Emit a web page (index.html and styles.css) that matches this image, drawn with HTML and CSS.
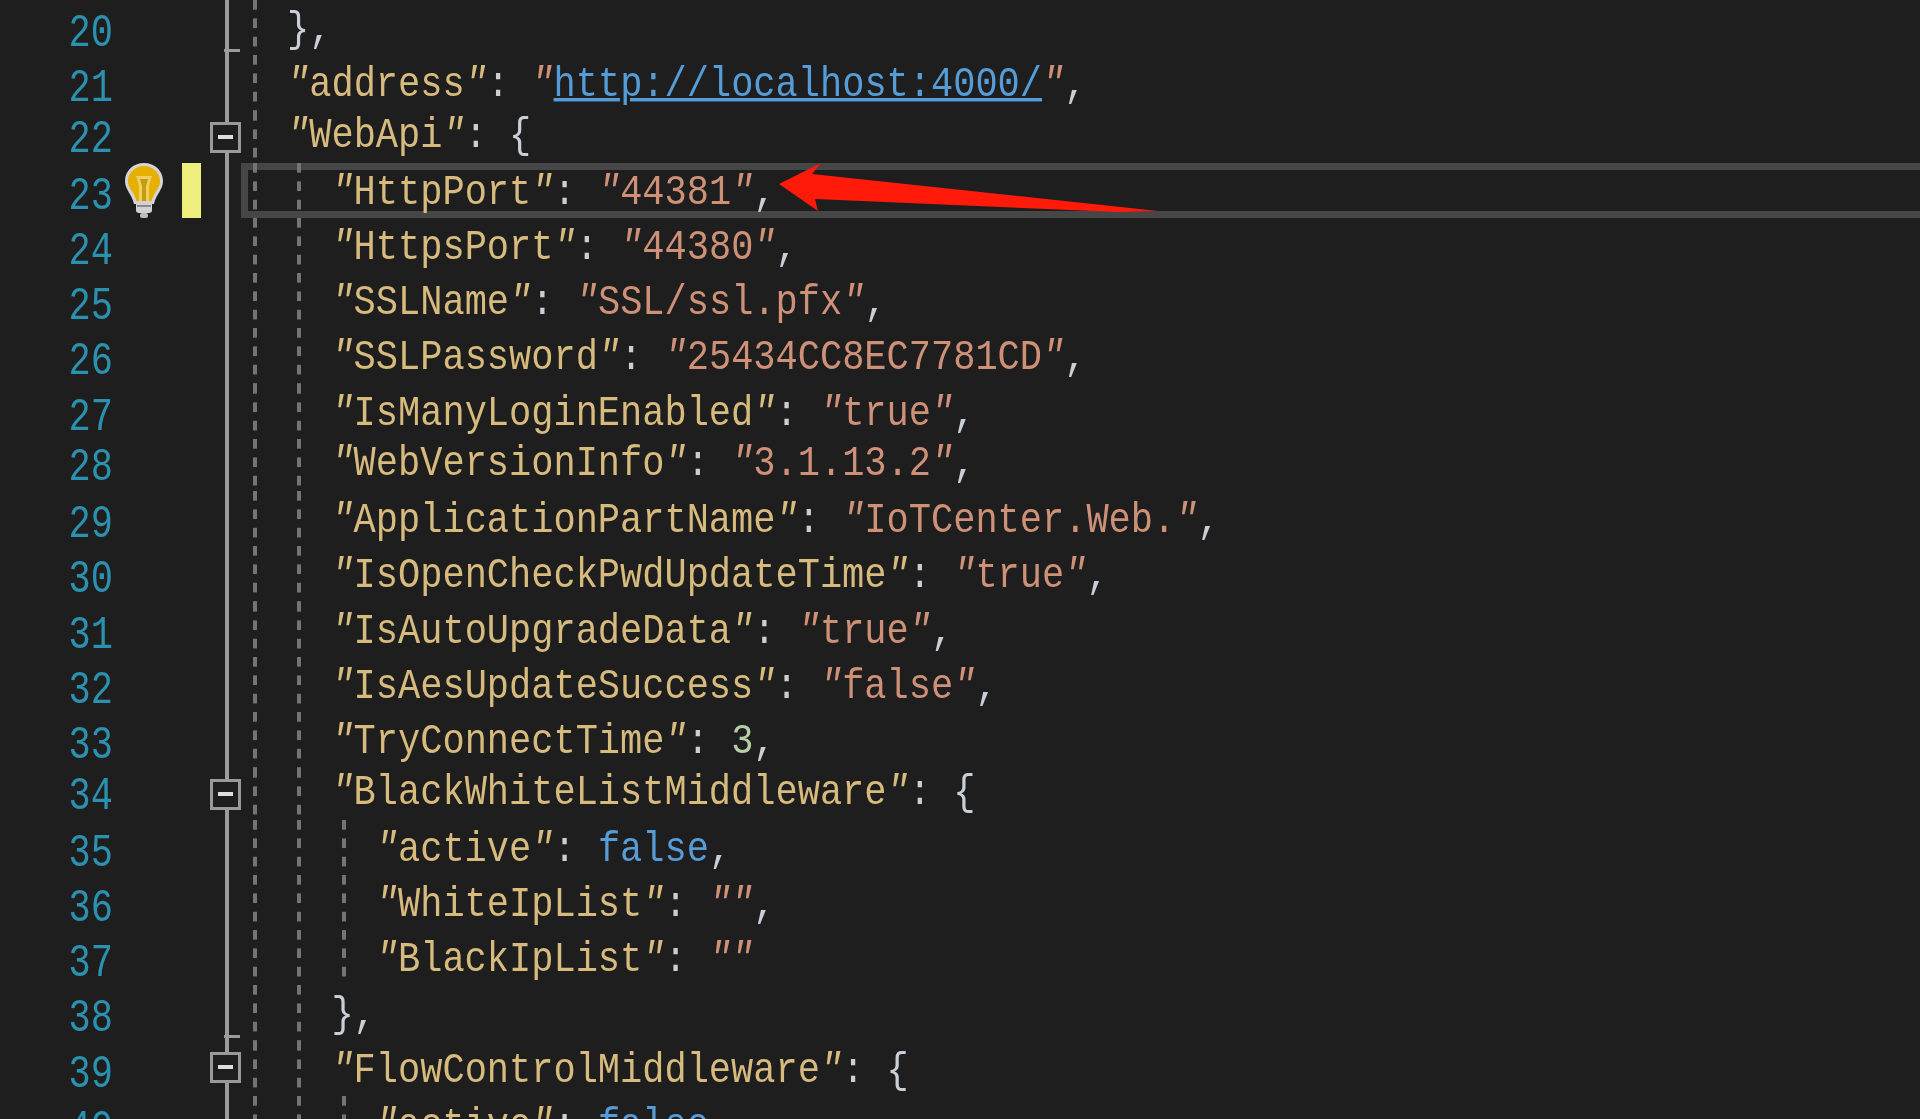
FILE: index.html
```html
<!DOCTYPE html>
<html lang="en">
<head>
<meta charset="utf-8">
<title>appsettings.json</title>
<link rel="stylesheet" href="styles.css">
</head>
<body>
<main class="editor">
  <div class="row"><span class="num">20</span><span class="mark"></span><span class="fold fold-end"></span><span class="guide"></span><span class="code"><b>},</b></span></div>
  <div class="row"><span class="num">21</span><span class="mark"></span><span class="fold"></span><span class="guide"></span><span class="code"><span class="k"><i>"</i>address<i>"</i></span><b>:</b> <span class="s"><i>"</i></span><a class="link">http://localhost:4000/</a><span class="s"><i>"</i></span><b>,</b></span></div>
  <div class="row short"><span class="num">22</span><span class="mark"></span><span class="fold fold-open"><span class="box"></span></span><span class="guide"></span><span class="code"><span class="k"><i>"</i>WebApi<i>"</i></span><b>: {</b></span></div>
  <div class="row current"><span class="num">23</span><span class="mark"><svg class="bulb" viewBox="0 0 38 55"><path d="M19 0C8 0 0 8 0 18c0 9 7 13 9 23h20c2-10 9-14 9-23C38 8 30 0 19 0z" fill="#d4d4d4"/><path d="M19 3C10 3 3 10 3 18c0 8 7 12 8.500 20h15c1.500-8 8.500-12 8.500-20C35 10 28 3 19 3z" fill="#e6b000"/><path d="M11 13h16l-3 9v16h-10V22z" fill="#f0cf62"/><path d="M15 16h8l-2 7v15h-4V23z" fill="#c79a14"/><rect x="11" y="38" width="16" height="12" rx="3" fill="#d2d2d2"/><rect x="12" y="42" width="14" height="2" fill="#8b8b8b"/><rect x="15" y="50" width="8" height="5" rx="2" fill="#bcbcbc"/></svg><span class="bar"></span></span><span class="fold"></span><span class="guide"></span><span class="guide"></span><span class="code"><span class="k"><i>"</i>HttpPort<i>"</i></span><b>:</b> <span class="s"><i>"</i>44381<i>"</i></span><b>,</b></span><svg class="arrow" viewBox="0 0 380 50"><polygon points="0,21 42,0 33,11 379,48 338,49 36,36 39,48"/></svg></div>
  <div class="row"><span class="num">24</span><span class="mark"></span><span class="fold"></span><span class="guide"></span><span class="guide"></span><span class="code"><span class="k"><i>"</i>HttpsPort<i>"</i></span><b>:</b> <span class="s"><i>"</i>44380<i>"</i></span><b>,</b></span></div>
  <div class="row"><span class="num">25</span><span class="mark"></span><span class="fold"></span><span class="guide"></span><span class="guide"></span><span class="code"><span class="k"><i>"</i>SSLName<i>"</i></span><b>:</b> <span class="s"><i>"</i>SSL/ssl.pfx<i>"</i></span><b>,</b></span></div>
  <div class="row"><span class="num">26</span><span class="mark"></span><span class="fold"></span><span class="guide"></span><span class="guide"></span><span class="code"><span class="k"><i>"</i>SSLPassword<i>"</i></span><b>:</b> <span class="s"><i>"</i>25434CC8EC7781CD<i>"</i></span><b>,</b></span></div>
  <div class="row"><span class="num">27</span><span class="mark"></span><span class="fold"></span><span class="guide"></span><span class="guide"></span><span class="code"><span class="k"><i>"</i>IsManyLoginEnabled<i>"</i></span><b>:</b> <span class="s"><i>"</i>true<i>"</i></span><b>,</b></span></div>
  <div class="row short"><span class="num">28</span><span class="mark"></span><span class="fold"></span><span class="guide"></span><span class="guide"></span><span class="code"><span class="k"><i>"</i>WebVersionInfo<i>"</i></span><b>:</b> <span class="s"><i>"</i>3.1.13.2<i>"</i></span><b>,</b></span></div>
  <div class="row"><span class="num">29</span><span class="mark"></span><span class="fold"></span><span class="guide"></span><span class="guide"></span><span class="code"><span class="k"><i>"</i>ApplicationPartName<i>"</i></span><b>:</b> <span class="s"><i>"</i>IoTCenter.Web.<i>"</i></span><b>,</b></span></div>
  <div class="row"><span class="num">30</span><span class="mark"></span><span class="fold"></span><span class="guide"></span><span class="guide"></span><span class="code"><span class="k"><i>"</i>IsOpenCheckPwdUpdateTime<i>"</i></span><b>:</b> <span class="s"><i>"</i>true<i>"</i></span><b>,</b></span></div>
  <div class="row"><span class="num">31</span><span class="mark"></span><span class="fold"></span><span class="guide"></span><span class="guide"></span><span class="code"><span class="k"><i>"</i>IsAutoUpgradeData<i>"</i></span><b>:</b> <span class="s"><i>"</i>true<i>"</i></span><b>,</b></span></div>
  <div class="row"><span class="num">32</span><span class="mark"></span><span class="fold"></span><span class="guide"></span><span class="guide"></span><span class="code"><span class="k"><i>"</i>IsAesUpdateSuccess<i>"</i></span><b>:</b> <span class="s"><i>"</i>false<i>"</i></span><b>,</b></span></div>
  <div class="row"><span class="num">33</span><span class="mark"></span><span class="fold"></span><span class="guide"></span><span class="guide"></span><span class="code"><span class="k"><i>"</i>TryConnectTime<i>"</i></span><b>:</b> <span class="n">3</span><b>,</b></span></div>
  <div class="row short"><span class="num">34</span><span class="mark"></span><span class="fold fold-open"><span class="box"></span></span><span class="guide"></span><span class="guide"></span><span class="code"><span class="k"><i>"</i>BlackWhiteListMiddleware<i>"</i></span><b>: {</b></span></div>
  <div class="row"><span class="num">35</span><span class="mark"></span><span class="fold"></span><span class="guide"></span><span class="guide"></span><span class="guide"></span><span class="code"><span class="k"><i>"</i>active<i>"</i></span><b>:</b> <span class="w">false</span><b>,</b></span></div>
  <div class="row"><span class="num">36</span><span class="mark"></span><span class="fold"></span><span class="guide"></span><span class="guide"></span><span class="guide"></span><span class="code"><span class="k"><i>"</i>WhiteIpList<i>"</i></span><b>:</b> <span class="s"><i>""</i></span><b>,</b></span></div>
  <div class="row"><span class="num">37</span><span class="mark"></span><span class="fold"></span><span class="guide"></span><span class="guide"></span><span class="guide"></span><span class="code"><span class="k"><i>"</i>BlackIpList<i>"</i></span><b>:</b> <span class="s"><i>""</i></span></span></div>
  <div class="row"><span class="num">38</span><span class="mark"></span><span class="fold fold-end"></span><span class="guide"></span><span class="guide"></span><span class="code"><b>},</b></span></div>
  <div class="row"><span class="num">39</span><span class="mark"></span><span class="fold fold-open"><span class="box"></span></span><span class="guide"></span><span class="guide"></span><span class="code"><span class="k"><i>"</i>FlowControlMiddleware<i>"</i></span><b>: {</b></span></div>
  <div class="row"><span class="num">40</span><span class="mark"></span><span class="fold"></span><span class="guide"></span><span class="guide"></span><span class="guide"></span><span class="code"><span class="k"><i>"</i>active<i>"</i></span><b>:</b> <span class="w">false</span><b>,</b></span></div>
</main>
</body>
</html>
```
FILE: styles.css
```css
html, body {
  margin: 0;
  height: 100%;
  background: #1e1e1e;
  overflow: hidden;
}
.editor {
  height: 1119px;
  overflow: hidden;
  font-family: "Liberation Mono", monospace;
  font-size: 37px;
  color: #dcdcdc;
}
.row {
  position: relative;
  display: flex;
  height: 55.3px;
  line-height: 55.3px;
  white-space: pre;
}
.row.short {
  height: 52px;
  line-height: 47px;
}
.num {
  width: 114px;
  flex: none;
  box-sizing: border-box;
  padding: 5px 1px 0 0;
  text-align: right;
  color: #2b91af;
  transform: scaleY(1.25);
  filter: blur(0.6px);
}
.mark {
  width: 96px;
  flex: none;
  display: flex;
  align-items: flex-start;
  position: relative;
}
.bulb {
  width: 38px;
  height: 55px;
  margin-left: 11px;
  flex: none;
  filter: blur(0.6px);
}
.bar {
  width: 19px;
  height: 55px;
  margin-left: 19px;
  background: #eeee7c;
}
.fold {
  width: 43px;
  flex: none;
  position: relative;
}
.fold::before {
  content: "";
  position: absolute;
  left: 15px;
  top: 0;
  bottom: 0;
  width: 4px;
  background: #9c9c9c;
}
.fold-end::after {
  content: "";
  position: absolute;
  left: 14px;
  bottom: 3px;
  width: 16px;
  height: 3px;
  background: #9c9c9c;
}
.box {
  position: absolute;
  z-index: 1;
  left: 0;
  top: 11px;
  width: 31px;
  height: 31px;
  box-sizing: border-box;
  background: #1e1e1e;
  border: 3px solid #9a9a9a;
}
.box::after {
  content: "";
  position: absolute;
  left: 5px;
  top: 10px;
  width: 15px;
  height: 4px;
  background: #dedede;
}
.guide {
  width: 44.4px;
  flex: none;
  position: relative;
  z-index: 1;
  background: linear-gradient(#747474 55%, transparent 55%) 0 0 / 4px 18.4px repeat-y;
}
.code {
  display: inline-block;
  margin-left: -10.4px;
  padding-top: 2px;
  position: relative;
  z-index: 1;
  transform: scaleY(1.15);
  filter: blur(0.6px);
}
.code b { font-weight: normal; color: #c9cfd6; }
.code i { font-style: italic; }
.k { color: #d7ba7d; }
.s { color: #ce9178; }
.n { color: #b5cea8; }
.w { color: #569cd6; }
.link {
  color: #569cd6;
  text-decoration: underline;
}
.current::after {
  content: "";
  position: absolute;
  left: 241px;
  right: 0;
  top: 0;
  bottom: 0;
  border: solid #464646;
  border-width: 7px 0 7px 7px;
}
.arrow {
  position: absolute;
  z-index: 2;
  left: 779px;
  top: 0;
  width: 380px;
  height: 50px;
  fill: #ff1a0a;
}
```
